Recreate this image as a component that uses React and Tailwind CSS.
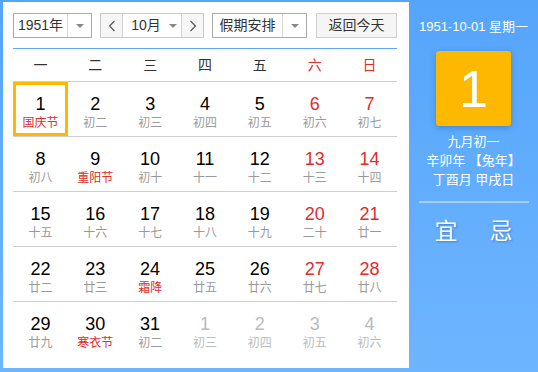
import React from "react";

const FONT = { fontFamily: '"Liberation Sans", "Noto Sans CJK SC", sans-serif' };

const weeks = ["一", "二", "三", "四", "五", "六", "日"];

// [day, lunar, festival?, otherMonth?]
const rows = [
    [[1, "国庆节", true], [2, "初二"], [3, "初三"], [4, "初四"], [5, "初五"], [6, "初六"], [7, "初七"]],
    [[8, "初八"], [9, "重阳节", true], [10, "初十"], [11, "十一"], [12, "十二"], [13, "十三"], [14, "十四"]],
    [[15, "十五"], [16, "十六"], [17, "十七"], [18, "十八"], [19, "十九"], [20, "二十"], [21, "廿一"]],
    [[22, "廿二"], [23, "廿三"], [24, "霜降", true], [25, "廿五"], [26, "廿六"], [27, "廿七"], [28, "廿八"]],
    [[29, "廿九"], [30, "寒衣节", true], [31, "初二"], [1, "初三", false, true], [2, "初四", false, true], [3, "初五", false, true], [4, "初六", false, true]],
];

function Caret() {
    return (
        <span className="block w-0 h-0 border-l-[4px] border-r-[4px] border-t-[4px] border-l-transparent border-r-transparent border-t-[#888]" />
    );
}

function Chevron({ dir }) {
    return (
        <svg width="8" height="12" viewBox="0 0 8 12" fill="none" stroke="#555" strokeWidth="1.2">
            {dir === "left" ? <path d="M6.5 1 L1.5 6 L6.5 11" /> : <path d="M1.5 1 L6.5 6 L1.5 11" />}
        </svg>
    );
}

function Toolbar() {
    return (
        <div className="flex items-center h-[25px] text-[14px] text-[#333]">
            <div className="flex h-full w-[79px] border border-[#a9a9a9] bg-white">
                <div className="flex-1 flex items-center justify-center">1951年</div>
                <div className="w-[24px] border-l border-[#d5d5d5] flex items-center justify-center">
                    <Caret />
                </div>
            </div>
            <div className="flex h-full w-[104px] ml-[8px] border border-[#c8c8c8] bg-white">
                <div className="w-[22px] flex items-center justify-center bg-[#f6f6f6] border-r border-[#d0d0d0]">
                    <Chevron dir="left" />
                </div>
                <div className="flex-1 flex items-center justify-center gap-[8px] pl-[4px]">
                    <span>10月</span>
                    <Caret />
                </div>
                <div className="w-[22px] flex items-center justify-center bg-[#f6f6f6] border-l border-[#d0d0d0]">
                    <Chevron dir="right" />
                </div>
            </div>
            <div className="flex h-full w-[95px] ml-[8px] border border-[#a9a9a9] bg-white">
                <div className="flex-1 flex items-center justify-center">假期安排</div>
                <div className="w-[24px] border-l border-[#d5d5d5] flex items-center justify-center">
                    <Caret />
                </div>
            </div>
            <div className="flex h-full w-[81px] ml-[9px] items-center justify-center border border-[#cfcfcf] bg-[#f5f5f5]">
                返回今天
            </div>
        </div>
    );
}

function Cell({ day, lunar, festival, other, col, selected }) {
    const weekend = col >= 5;
    const numColor = other ? "text-[#bbbbbb]" : weekend ? "text-[#e22b2b]" : "text-black";
    const lunarColor = other ? "text-[#bbbbbb]" : festival ? "text-[#e22b2b]" : "text-[#9a9a9a]";
    return (
        <div
            className={
                "h-[54px] flex flex-col items-center border-[3px] " +
                (selected ? "border-[#ffb800]" : "border-transparent")
            }
        >
            <span className={"mt-[9px] text-[18px] leading-[20px] " + numColor}>{day}</span>
            <span className={"mt-[1px] text-[12px] leading-[16px] " + lunarColor}>{lunar}</span>
        </div>
    );
}

function Calendar() {
    return (
        <div className="w-[406px] bg-white pl-[10px] pr-[12px] pt-[11px]">
            <Toolbar />
            <div className="mt-[10px] h-px bg-[#5aa7fb]" />
            <div className="grid grid-cols-7 h-[33px] items-center text-[14px] text-[#333] border-b border-[#cfcfcf]">
                {weeks.map((w, i) => (
                    <div key={w} className={"text-center " + (i >= 5 ? "text-[#e22b2b]" : "")}>
                        {w}
                    </div>
                ))}
            </div>
            {rows.map((row, r) => (
                <div key={r} className={"grid grid-cols-7 " + (r > 0 ? "border-t border-[#cfcfcf]" : "")}>
                    {row.map(([day, lunar, festival, other], c) => (
                        <Cell
                            key={c}
                            day={day}
                            lunar={lunar}
                            festival={festival}
                            other={other}
                            col={c}
                            selected={r === 0 && c === 0}
                        />
                    ))}
                </div>
            ))}
        </div>
    );
}

function SidePanel() {
    return (
        <div className="flex-1 flex flex-col items-center text-white">
            <div className="mt-[17px] text-[13px] leading-[16px]">1951-10-01 星期一</div>
            <div className="mt-[16px] w-[75px] h-[75px] rounded-[3px] bg-[#ffb800] shadow-[0_2px_6px_rgba(0,60,140,0.3)] flex items-center justify-center">
                <span className="text-[52px] leading-none">1</span>
            </div>
            <div className="mt-[6px] text-[13px] leading-[19px] text-center">
                <div>九月初一</div>
                <div>辛卯年 【兔年】</div>
                <div>丁酉月 甲戌日</div>
            </div>
            <div className="mt-[12px] w-[110px] h-[2px] bg-[#a8d0fd]" />
            <div className="mt-[15px] flex gap-[32px] text-[23px] leading-[26px] [text-shadow:1px_1px_2px_rgba(0,40,120,0.35)]">
                <span>宜</span>
                <span>忌</span>
            </div>
        </div>
    );
}

export default function App() {
    return (
        <div
            className="w-[538px] h-[372px] flex pl-[3px] pt-[2px] pb-[4px] bg-gradient-to-b from-[#55a5fb] to-[#6eb5ff]"
            style={FONT}
        >
            <Calendar />
            <SidePanel />
        </div>
    );
}
